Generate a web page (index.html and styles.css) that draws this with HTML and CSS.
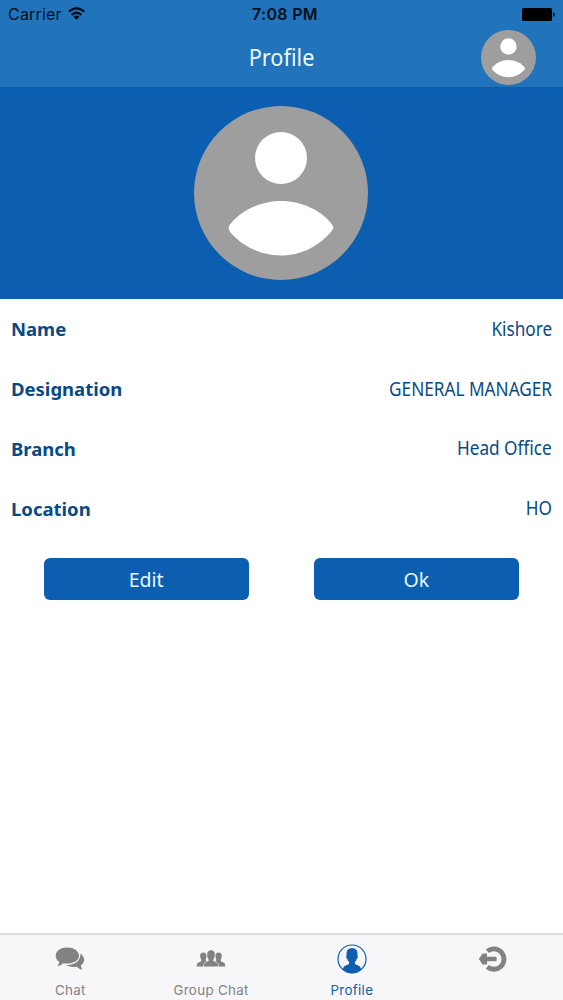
FILE: index.html
```html
<!DOCTYPE html>
<html lang="en">
<head>
<meta charset="utf-8">
<title>Profile</title>
<link rel="stylesheet" href="styles.css">
</head>
<body>
<div class="app">
  <header class="header">
    <div class="status">
      <div class="carrier"><span>Carrier</span>
        <svg class="wifi" viewBox="0 0 17 13"><g fill="none" stroke="currentColor" stroke-width="2.3"><path d="M.8 4.7Q8.5-2.1 16.2 4.7"/><path d="M3.6 7.900Q8.5 3.500 13.4 7.900"/></g><path fill="currentColor" d="M5.5 9.700Q8.5 7.100 11.5 9.700L8.5 12.7Z"/></svg>
      </div>
      <div class="time">7:08 PM</div>
      <svg class="battery" viewBox="0 0 33 13"><rect width="30" height="13" rx="1.5"/><path d="M31 4.3h.5q1.3 1 1.3 2.2t-1.3 2.2H31z"/></svg>
    </div>
    <div class="navbar">
      <h1 class="title"><span>Profile</span></h1>
      <svg class="avatar-small" viewBox="0 0 174 174"><circle cx="87" cy="87" r="87" fill="#9f9e9f"/><circle cx="87" cy="52" r="26" fill="#fff"/><path fill="#fff" d="M35 120C45 105 66 95 87 95S129 105 139 120Q140 122 137 126C124 141 106 149.500 87 149.500S49 141 36 126Q34 122 35 120Z"/></svg>
    </div>
  </header>
  <section class="hero">
    <svg class="avatar" viewBox="0 0 174 174"><circle cx="87" cy="87" r="87" fill="#9f9e9f"/><circle cx="87" cy="52" r="26" fill="#fff"/><path fill="#fff" d="M35 120C45 105 66 95 87 95S129 105 139 120Q140 122 137 126C124 141 106 149.500 87 149.500S49 141 36 126Q34 122 35 120Z"/></svg>
  </section>
  <main class="content">
    <dl class="fields">
      <div class="field"><dt>Name</dt><dd>Kishore</dd></div>
      <div class="field"><dt>Designation</dt><dd>GENERAL MANAGER</dd></div>
      <div class="field"><dt>Branch</dt><dd>Head Office</dd></div>
      <div class="field"><dt>Location</dt><dd>HO</dd></div>
    </dl>
    <div class="actions">
      <button class="button">Edit</button>
      <button class="button">Ok</button>
    </div>
  </main>
  <nav class="tabs">
    <a class="tab">
      <svg viewBox="0 0 30 30"><path d="M12 3.500C5.800 3.500.7 7 .7 11.700c0 2.600 1.400 4.700 3.700 6.200-.2 1.500-1 2.700-2.400 4 2.500 0 4.500-.9 6.200-2.600C17 20.500 24 17 24 11.700 24 7 18.700 3.500 12 3.500Z"/><path d="M25.400 9.500c5.200 4 4.800 8.900.4 12 .2 1.500.7 2.800 1.800 4-2.500-.2-4.200-1-5.800-2.700-4.500.5-8-.1-10.700-1.800 8.500.2 14.700-4.200 14.300-11.500Z"/></svg>
      <span>Chat</span>
    </a>
    <a class="tab">
      <svg viewBox="0 0 30 30"><path d="M.7 22.500c0-3.500 1.300-3.900 4-5 1-.5.700-1.300.2-2.500-1.400-3.200-.8-6.500 2.500-6.500 2.500 0 3.700 2 3 5-.5 2-1.200 3 .3 3.700-2.300 1-3.500 2.300-3.700 5.300Z"/><path d="M29.300 22.500c0-3.500-1.300-3.900-4-5-1-.5-.7-1.300-.2-2.500 1.400-3.200.8-6.500-2.500-6.500-2.500 0-3.700 2-3 5 .5 2 1.200 3-.3 3.700 2.300 1 3.500 2.300 3.700 5.300Z"/><path d="M7.600 22.500c.2-3.600 1.600-4.100 4.100-5 1.500-.7 1.200-1.600.4-3.100-.6-1-.9-2.200-.9-3.700-.2-2.900 1.300-4.500 3.800-4.500s4 1.600 3.800 4.500c0 1.500-.3 2.700-.9 3.700-.8 1.500-1.100 2.400.4 3.100 2.500.9 3.900 1.400 4.100 5Z"/></svg>
      <span>Group Chat</span>
    </a>
    <a class="tab active">
      <svg viewBox="0 0 30 30"><circle cx="15" cy="15" r="14" fill="none" stroke="currentColor" stroke-width="1.200"/><path d="M5.800 25.400c.5-3.100 2.500-3.800 5.500-4.800 1.100-.5 1-1.800.5-3-.8-.5-1.400-1.500-1.500-2.800-1.100-.5-1.500-3.100-.6-3.500C8.900 6.700 11 4.300 15 4.300s6.100 2.400 5.300 7c.9.400.5 3-.6 3.500-.1 1.300-.7 2.300-1.500 2.800-.5 1.200-.6 2.500.5 3 3 1 5 1.700 5.500 4.800Q15 33 5.800 25.400Z"/></svg>
      <span>Profile</span>
    </a>
    <a class="tab" aria-label="Log out">
      <svg viewBox="0 0 30 30"><path d="M8.800 6.500A11 11 0 1 1 8.800 23.500" fill="none" stroke="currentColor" stroke-width="5.200" transform="translate(1.100 1.100) scale(.93)"/><path d="M.8 15L4.600 9.500H9v3.200h8.500q1.200 0 1.200 1.200v2.200q0 1.200-1.200 1.200H9v3.200H4.600Z"/></svg>
      <span></span>
    </a>
  </nav>
</div>
</body>
</html>
```
FILE: styles.css
```css
* { box-sizing: border-box; }
body { margin: 0; background: #fff; font-family: "Noto Sans", sans-serif; }
.app { width: 563px; height: 1000px; display: flex; flex-direction: column; }
.header { height: 88px; background: #2173bc; border-bottom: 1px solid #145c9f; }
.status { height: 29px; padding: 0 8px; display: grid; grid-template-columns: 1fr auto 1fr; align-items: center; color: #03101e; font: 16px/29px Inter, sans-serif; }
.carrier { display: flex; align-items: center; gap: 6px; letter-spacing: .2px; }
.wifi { width: 17px; height: 13px; margin-top: -2px; }
.time { font-weight: 600; letter-spacing: .3px; padding-left: 7px; }
.battery { width: 33px; height: 13px; justify-self: end; fill: #000; }
.navbar { height: 57px; display: grid; grid-template-columns: 1fr auto 1fr; align-items: center; padding-right: 27px; }
.title { grid-column: 2; margin: 0 0 2px 27px; color: #e9faff; font-size: 23.500px; line-height: 54px; font-weight: 400; }
.title span { display: inline-block; transform: scaleX(.925); }
.avatar-small { width: 55px; height: 55px; justify-self: end; }
.hero { height: 211px; display: flex; justify-content: center; padding: 18px 1px 0 0; background: #0b5eb0; }
.avatar { width: 174px; height: 174px; }
.content { flex: 1; }
.fields { margin: 0; padding: 0 11px; color: #074a86; font-size: 18.500px; }
.field { height: 59.800px; display: flex; justify-content: space-between; align-items: center; }
.field dt { font-weight: 700; }
.field dd { margin: 0; font-size: 19px; transform: scaleX(.905); transform-origin: right; }
.actions { display: flex; gap: 65px; padding: 20px 0 0 43.500px; }
.button { width: 205.300px; height: 42px; padding: 0; border: 0; border-radius: 6px; background: #0b5eb0; color: #e9faff; font: 19.500px "Noto Sans", sans-serif; }
.tabs { height: 67px; display: grid; grid-template-columns: repeat(4, 1fr); background: #f7f7f9; border-top: 2px solid #dedee0; }
.tab { display: flex; flex-direction: column; align-items: center; padding-top: 9px; color: #828285; font: 13.300px/18px Inter, sans-serif; letter-spacing: .35px; }
.tab svg { width: 30px; height: 30px; fill: currentColor; }
.tab span { margin-top: 7px; }
.tab.active { color: #0b5eb0; }
```
